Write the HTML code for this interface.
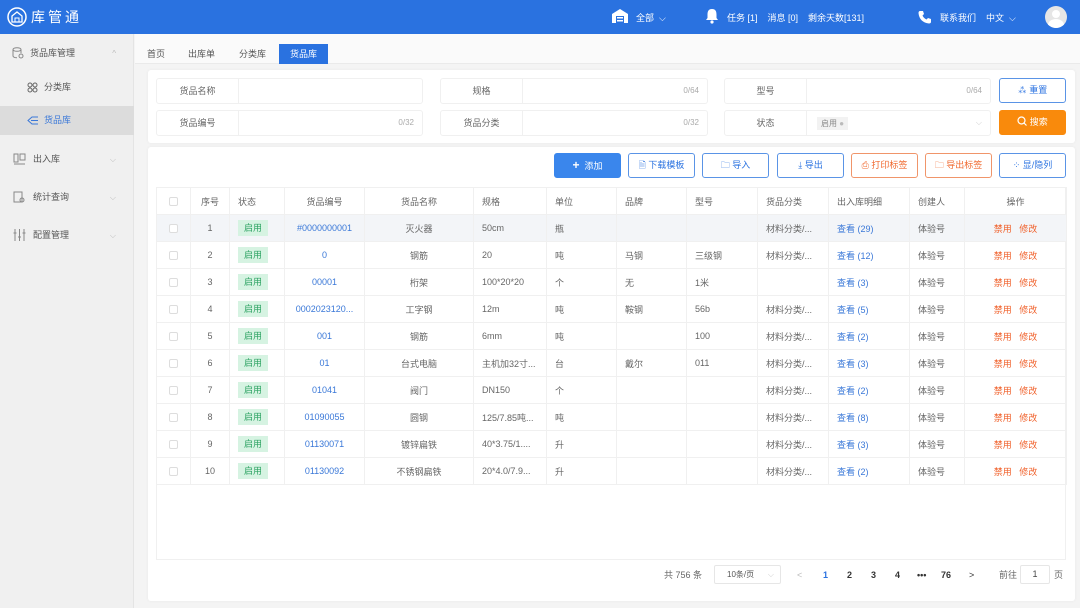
<!DOCTYPE html>
<html><head><meta charset="utf-8">
<style>
*{box-sizing:border-box;margin:0;padding:0}
body{width:1080px;height:608px;overflow:hidden;background:#f4f4f4;font-family:"Liberation Sans","Noto Sans CJK SC",sans-serif;font-size:9px;color:#666;position:relative}
.abs{position:absolute}
#hdr{left:0;top:0;width:1080px;height:34px;background:#2a72e0;color:#fff}
#side{left:0;top:34px;width:134px;height:574px;background:#f0f0f0;border-right:1px solid #e4e4e4}
.si{position:absolute;left:0;width:134px;height:29px;line-height:29px;font-size:9px;color:#555}
.si svg{position:absolute;top:8px}
.chev{position:absolute;right:18px;color:#bbb;font-size:8px}
#tabs{left:135px;top:34px;width:945px;height:30px;background:#fafafa;border-bottom:1px solid #eaeaea}
.tab{position:absolute;top:10px;height:20px;line-height:20px;font-size:9px;color:#555}
.card{background:#fff;border-radius:3px;box-shadow:0 0 3px rgba(0,0,0,.05)}
.fld{position:absolute;height:26px;border:1px solid #f0f0f0;border-radius:3px;background:#fff}
.fld .lb{position:absolute;left:0;top:0;width:82px;height:24px;line-height:24px;text-align:center;border-right:1px solid #f0f0f0;color:#666}
.fld .ct{position:absolute;right:8px;top:0;line-height:24px;color:#aaa;font-size:8px}
.btn{position:absolute;height:25px;line-height:23px;border:1px solid #5a94e6;border-radius:3px;color:#2a72e0;text-align:center;font-size:9px;background:#fff}
.btn.o{border-color:#f0956a;color:#f06a30}
table{border-collapse:collapse;position:absolute;left:156px;top:187px;table-layout:fixed}
td,th{height:27px;border:1px solid #f0f0f0;font-weight:normal;font-size:9px;color:#666;white-space:nowrap;overflow:hidden;padding:0 8px}
.c{text-align:center}
.cb{display:inline-block;width:9px;height:9px;border:1px solid #ddd;border-radius:2px;vertical-align:middle}
.tag{display:inline-block;background:#d6f3e2;color:#2ea363;padding:0 6px;height:16px;line-height:16px;font-size:9px}
td.lk,.lk{color:#3a78d8}
td.rd{color:#f0602a}
tr.hl td{background:#f3f5f8}
.pg{position:absolute;top:568px;line-height:14px;font-size:9px;color:#333;font-weight:bold}
</style></head><body>
<div id="hdr" class="abs">
  <svg class="abs" style="left:7px;top:7px" width="20" height="20" viewBox="0 0 20 20"><circle cx="10" cy="10" r="9" fill="none" stroke="#fff" stroke-width="1.5"/><path d="M5 9 L10 5 L15 9 V15 H5 Z" fill="none" stroke="#fff" stroke-width="1.3"/><path d="M8 15 V11 H12 V15" fill="none" stroke="#fff" stroke-width="1"/></svg>
  <div class="abs" style="left:31px;top:7px;font-size:14px;letter-spacing:3px">库管通</div>
  <svg class="abs" style="left:612px;top:9px" width="16" height="14" viewBox="0 0 16 14"><path d="M0 5 L8 0 L16 5 V14 H0Z" fill="#fff"/><rect x="4" y="7" width="8" height="7" fill="#2a72e0"/><rect x="5" y="8" width="6" height="1.5" fill="#fff"/><rect x="5" y="11" width="6" height="1.5" fill="#fff"/></svg>
  <div class="abs" style="left:636px;top:11px;font-size:9px">全部 &nbsp;⌵</div>
  <svg class="abs" style="left:705px;top:8px" width="14" height="16" viewBox="0 0 14 16"><path d="M7 1 C3 1 2.5 4 2.5 7 V10 L1 12 H13 L11.5 10 V7 C11.5 4 11 1 7 1Z" fill="#fff"/><circle cx="7" cy="14" r="1.6" fill="#fff"/></svg>
  <div class="abs" style="left:727px;top:11px;font-size:9px">任务 [1] &nbsp;&nbsp; 消息 [0] &nbsp;&nbsp; 剩余天数[131]</div>
  <svg class="abs" style="left:918px;top:10px" width="14" height="14" viewBox="0 0 14 14"><path d="M2 1 L5 1 L6 4 L4.5 5.5 C5.5 7.5 6.5 8.5 8.5 9.5 L10 8 L13 9 V12 C13 13 12 13.5 11 13.5 C5 13 1 9 0.5 3 C0.5 2 1 1 2 1Z" fill="#fff"/></svg>
  <div class="abs" style="left:940px;top:11px;font-size:9px">联系我们 &nbsp;&nbsp; 中文 &nbsp;⌵</div>
  <div class="abs" style="left:1045px;top:6px;width:22px;height:22px;border-radius:50%;background:#e6e6e6;overflow:hidden"><div class="abs" style="left:7px;top:4px;width:8px;height:8px;border-radius:50%;background:#fff"></div><div class="abs" style="left:3px;top:13px;width:16px;height:12px;border-radius:50%;background:#fff"></div></div>
</div>
<div id="side" class="abs">
  <div class="si" style="top:5px;padding-left:30px">货品库管理<span class="chev">^</span><svg style="left:12px" width="12" height="12" viewBox="0 0 12 12" fill="none" stroke="#888"><ellipse cx="5" cy="2.5" rx="4" ry="1.8"/><path d="M1 2.5V9c0 1 2 1.8 4 1.8M9 2.5V6"/><circle cx="9" cy="9" r="2"/></svg></div>
  <div class="si" style="top:39px;padding-left:44px"><svg style="left:27px;top:9px" width="11" height="11" viewBox="0 0 11 11" fill="none" stroke="#666"><circle cx="3" cy="3" r="2"/><circle cx="8" cy="3" r="2"/><circle cx="3" cy="8" r="2"/><circle cx="8" cy="8" r="2"/></svg>分类库</div>
  <div class="si" style="top:72px;padding-left:44px;background:#dcdcdc;color:#3a78d8"><svg style="left:27px;top:9px" width="12" height="11" viewBox="0 0 12 11" fill="none" stroke="#3a78d8"><path d="M11 2H5L1 5.5L5 9H11M4 5.5H11"/></svg>货品库</div>
  <div class="si" style="top:111px;padding-left:33px"><svg style="left:13px" width="13" height="12" viewBox="0 0 13 12" fill="none" stroke="#888"><rect x="1" y="1" width="4" height="8"/><rect x="7" y="1" width="5" height="6"/><path d="M1 11H12"/></svg>出入库<span class="chev">⌵</span></div>
  <div class="si" style="top:149px;padding-left:33px"><svg style="left:13px" width="12" height="12" viewBox="0 0 12 12" fill="none" stroke="#888"><rect x="1" y="1" width="8" height="10"/><circle cx="9" cy="9" r="2"/></svg>统计查询<span class="chev">⌵</span></div>
  <div class="si" style="top:187px;padding-left:33px"><svg style="left:13px" width="13" height="12" viewBox="0 0 13 12" fill="none" stroke="#888"><path d="M2 0V12M6.5 0V12M11 0V12"/><path d="M0.5 4H3.5M5 8H8M9.5 4H12.5"/></svg>配置管理<span class="chev">⌵</span></div>
</div>
<div id="tabs" class="abs">
  <div class="tab" style="left:12px">首页</div>
  <div class="tab" style="left:53px">出库单</div>
  <div class="tab" style="left:104px">分类库</div>
  <div class="tab" style="left:144px;width:49px;text-align:center;background:#2a72e0;color:#fff">货品库</div>
</div>
<div class="abs card" style="left:148px;top:70px;width:927px;height:73px"></div>
<div class="fld" style="left:156px;top:78px;width:267px"><div class="lb">货品名称</div></div>
<div class="fld" style="left:440px;top:78px;width:268px"><div class="lb">规格</div><div class="ct">0/64</div></div>
<div class="fld" style="left:724px;top:78px;width:267px"><div class="lb">型号</div><div class="ct">0/64</div></div>
<div class="fld" style="left:156px;top:110px;width:267px"><div class="lb">货品编号</div><div class="ct">0/32</div></div>
<div class="fld" style="left:440px;top:110px;width:268px"><div class="lb">货品分类</div><div class="ct">0/32</div></div>
<div class="fld" style="left:724px;top:110px;width:267px"><div class="lb">状态</div><div class="abs" style="left:92px;top:6px;height:13px;line-height:13px;padding:0 4px;background:#f2f2f2;color:#888;font-size:8px">启用 <span style="color:#bbb">●</span></div><div class="ct" style="color:#ccc">⌵</div></div>
<div class="btn" style="left:999px;top:78px;width:67px">⁂ 重置</div>
<div class="btn" style="left:999px;top:110px;width:67px;background:#f98a0c;border-color:#f98a0c;color:#fff"><svg width="10" height="10" viewBox="0 0 10 10" style="vertical-align:-1px" fill="none" stroke="#fff" stroke-width="1.2"><circle cx="4.5" cy="4.5" r="3.5"/><path d="M7 7L9.5 9.5"/></svg> 搜索</div>
<div class="abs card" style="left:148px;top:147px;width:927px;height:454px"></div>
<div class="btn" style="left:554px;top:153px;width:67px;background:#3a86ec;border-color:#3a86ec;color:#fff"><b style="font-size:12px">+</b>&nbsp; 添加</div>
<div class="btn" style="left:628px;top:153px;width:67px">🗎 下载模板</div>
<div class="btn" style="left:702px;top:153px;width:67px">🗀 导入</div>
<div class="btn" style="left:777px;top:153px;width:67px">⤓ 导出</div>
<div class="btn o" style="left:851px;top:153px;width:67px">⎙ 打印标签</div>
<div class="btn o" style="left:925px;top:153px;width:67px">🗀 导出标签</div>
<div class="btn" style="left:999px;top:153px;width:67px">⁘ 显/隐列</div>
<div class="abs" style="left:156px;top:187px;width:910px;height:373px;border:1px solid #f0f0f0"></div>
<table>
<colgroup><col style="width:34px"><col style="width:39px"><col style="width:55px"><col style="width:80px"><col style="width:109px"><col style="width:73px"><col style="width:70px"><col style="width:70px"><col style="width:71px"><col style="width:71px"><col style="width:81px"><col style="width:55px"><col style="width:102px"></colgroup>
<tr><th class="c"><span class="cb"></span></th><th class="c">序号</th><th style="text-align:left">状态</th><th class="c">货品编号</th><th class="c">货品名称</th><th style="text-align:left">规格</th><th style="text-align:left">单位</th><th style="text-align:left">品牌</th><th style="text-align:left">型号</th><th style="text-align:left">货品分类</th><th style="text-align:left">出入库明细</th><th style="text-align:left">创建人</th><th class="c">操作</th></tr>
<tr class="hl"><td class="c"><span class="cb" style="background:#fff"></span></td><td class="c">1</td><td><span class="tag">启用</span></td><td class="c lk">#0000000001</td><td class="c">灭火器</td><td>50cm</td><td>瓶</td><td></td><td></td><td>材料分类/...</td><td class="lk">查看 (29)</td><td>体验号</td><td class="c rd">禁用 &nbsp; 修改</td></tr>
<tr><td class="c"><span class="cb"></span></td><td class="c">2</td><td><span class="tag">启用</span></td><td class="c lk">0</td><td class="c">钢筋</td><td>20</td><td>吨</td><td>马钢</td><td>三级钢</td><td>材料分类/...</td><td class="lk">查看 (12)</td><td>体验号</td><td class="c rd">禁用 &nbsp; 修改</td></tr>
<tr><td class="c"><span class="cb"></span></td><td class="c">3</td><td><span class="tag">启用</span></td><td class="c lk">00001</td><td class="c">桁架</td><td>100*20*20</td><td>个</td><td>无</td><td>1米</td><td></td><td class="lk">查看 (3)</td><td>体验号</td><td class="c rd">禁用 &nbsp; 修改</td></tr>
<tr><td class="c"><span class="cb"></span></td><td class="c">4</td><td><span class="tag">启用</span></td><td class="c lk">0002023120...</td><td class="c">工字钢</td><td>12m</td><td>吨</td><td>鞍钢</td><td>56b</td><td>材料分类/...</td><td class="lk">查看 (5)</td><td>体验号</td><td class="c rd">禁用 &nbsp; 修改</td></tr>
<tr><td class="c"><span class="cb"></span></td><td class="c">5</td><td><span class="tag">启用</span></td><td class="c lk">001</td><td class="c">钢筋</td><td>6mm</td><td>吨</td><td></td><td>100</td><td>材料分类/...</td><td class="lk">查看 (2)</td><td>体验号</td><td class="c rd">禁用 &nbsp; 修改</td></tr>
<tr><td class="c"><span class="cb"></span></td><td class="c">6</td><td><span class="tag">启用</span></td><td class="c lk">01</td><td class="c">台式电脑</td><td>主机加32寸...</td><td>台</td><td>戴尔</td><td>011</td><td>材料分类/...</td><td class="lk">查看 (3)</td><td>体验号</td><td class="c rd">禁用 &nbsp; 修改</td></tr>
<tr><td class="c"><span class="cb"></span></td><td class="c">7</td><td><span class="tag">启用</span></td><td class="c lk">01041</td><td class="c">阀门</td><td>DN150</td><td>个</td><td></td><td></td><td>材料分类/...</td><td class="lk">查看 (2)</td><td>体验号</td><td class="c rd">禁用 &nbsp; 修改</td></tr>
<tr><td class="c"><span class="cb"></span></td><td class="c">8</td><td><span class="tag">启用</span></td><td class="c lk">01090055</td><td class="c">圆钢</td><td>125/7.85吨...</td><td>吨</td><td></td><td></td><td>材料分类/...</td><td class="lk">查看 (8)</td><td>体验号</td><td class="c rd">禁用 &nbsp; 修改</td></tr>
<tr><td class="c"><span class="cb"></span></td><td class="c">9</td><td><span class="tag">启用</span></td><td class="c lk">01130071</td><td class="c">镀锌扁铁</td><td>40*3.75/1....</td><td>升</td><td></td><td></td><td>材料分类/...</td><td class="lk">查看 (3)</td><td>体验号</td><td class="c rd">禁用 &nbsp; 修改</td></tr>
<tr><td class="c"><span class="cb"></span></td><td class="c">10</td><td><span class="tag">启用</span></td><td class="c lk">01130092</td><td class="c">不锈钢扁铁</td><td>20*4.0/7.9...</td><td>升</td><td></td><td></td><td>材料分类/...</td><td class="lk">查看 (2)</td><td>体验号</td><td class="c rd">禁用 &nbsp; 修改</td></tr>
</table>
<div class="pg" style="left:664px;font-weight:normal;color:#666">共 756 条</div>
<div class="abs" style="left:714px;top:565px;width:67px;height:19px;border:1px solid #e6e6e6;border-radius:2px;line-height:17px;padding-left:12px;font-size:8px;color:#555">10条/页 <span style="position:absolute;right:6px;color:#ccc">⌵</span></div>
<div class="pg" style="left:797px;color:#bbb;font-weight:normal">&lt;</div>
<div class="pg" style="left:823px;color:#2a72e0">1</div>
<div class="pg" style="left:847px">2</div>
<div class="pg" style="left:871px">3</div>
<div class="pg" style="left:895px">4</div>
<div class="pg" style="left:917px">•••</div>
<div class="pg" style="left:941px">76</div>
<div class="pg" style="left:969px;font-weight:normal">&gt;</div>
<div class="pg" style="left:999px;font-weight:normal;color:#666">前往</div>
<div class="abs" style="left:1020px;top:565px;width:30px;height:19px;border:1px solid #e6e6e6;border-radius:2px;text-align:center;line-height:17px;font-size:9px;color:#444">1</div>
<div class="pg" style="left:1054px;font-weight:normal;color:#666">页</div>
</body></html>
